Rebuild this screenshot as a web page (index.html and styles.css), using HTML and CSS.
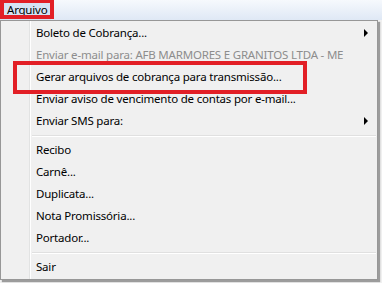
FILE: index.html
```html
<!DOCTYPE html>
<html lang="pt">
<head>
<meta charset="utf-8">
<link rel="stylesheet" href="styles.css">
</head>
<body>
<div class="screen">
  <div class="menubar">
    <span class="menubar-item active">Arquivo</span>
  </div>
  <div class="menu">
    <div class="item">Boleto de Cobrança...<span class="arrow"></span></div>
    <div class="item disabled">Enviar e-mail para: AFB MARMORES E GRANITOS LTDA - ME</div>
    <div class="item">Gerar arquivos de cobrança para transmissão...</div>
    <div class="item">Enviar aviso de vencimento de contas por e-mail...</div>
    <div class="item">Enviar SMS para:<span class="arrow"></span></div>
    <div class="sep"></div>
    <div class="item">Recibo</div>
    <div class="item">Carnê...</div>
    <div class="item">Duplicata...</div>
    <div class="item">Nota Promissória...</div>
    <div class="item">Portador...</div>
    <div class="sep"></div>
    <div class="item">Sair</div>
  </div>
  <div class="mark mark-menubar"></div>
  <div class="mark mark-item"></div>
</div>
</body>
</html>
```
FILE: styles.css
```css
* { box-sizing: border-box; }
html, body {
  margin: 0;
  padding: 0;
  width: 382px;
  height: 283px;
  overflow: hidden;
  background: #f0f0f0;
  font-family: "Noto Sans", "Open Sans", sans-serif;
  font-size: 11.5px;
  letter-spacing: -0.2px;
  color: #000;
}
.screen {
  position: relative;
  width: 382px;
  height: 283px;
}
.menubar {
  height: 20px;
  background: linear-gradient(#f6f9fd, #dfe8f5);
  display: flex;
  align-items: stretch;
}
.menubar-item {
  padding: 1px 4px 0 7px;
  line-height: 17px;
}
.menubar-item.active {
  background: #d6e3f3;
}
.menu {
  width: 378px;
  border: 1px solid #979797;
  padding: 1px 1px;
  background: linear-gradient(to right, #f0f0f0 28px, #e2e3e3 28px, #e2e3e3 29px, #ffffff 29px, #ffffff 30px, #f0f0f0 30px);
  box-shadow: 2px 2px 1px rgba(0, 0, 0, 0.35);
  display: flex;
  flex-direction: column;
}
.item {
  height: 22px;
  line-height: 22px;
  padding-left: 34px;
  position: relative;
  white-space: nowrap;
}
.item.disabled { color: #8d8d8d; }
.arrow {
  position: absolute;
  right: 8px;
  top: 7px;
  width: 0;
  height: 0;
  border-top: 4px solid transparent;
  border-bottom: 4px solid transparent;
  border-left: 4px solid #000;
}
.sep {
  height: 7px;
  margin-left: 30px;
  display: flex;
  flex-direction: column;
  justify-content: center;
}
.sep::before {
  content: "";
  display: block;
  height: 1px;
  background: #e0e0e0;
  border-bottom: 1px solid #ffffff;
  box-sizing: content-box;
}
.mark {
  position: absolute;
  border: 4px solid #e21f26;
}
.mark-menubar {
  left: 0;
  top: 0;
  width: 54px;
  height: 19px;
  border-top-width: 3px;
}
.mark-item {
  left: 13px;
  top: 61px;
  width: 294px;
  height: 33px;
}
```
